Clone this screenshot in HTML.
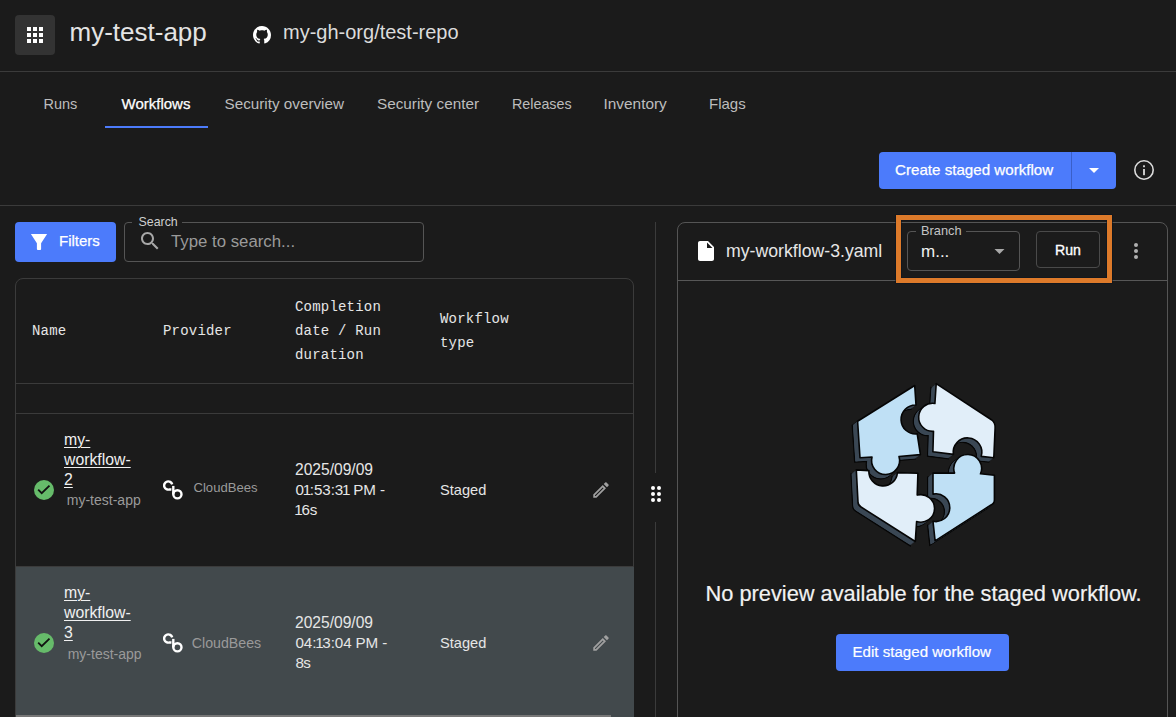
<!DOCTYPE html>
<html><head><meta charset="utf-8">
<style>
*{box-sizing:border-box;margin:0;padding:0}
html,body{width:1176px;height:717px;overflow:hidden;background:#1b1b1b;font-family:"Liberation Sans",sans-serif;color:#e6e6e6}
.abs{position:absolute}
.t{position:absolute;white-space:nowrap}
.hline{position:absolute;height:1px;background:#3b3b3b}
.vline{position:absolute;width:1px;background:#3b3b3b}
.tab{position:absolute;top:95px;font-size:15px;color:#bdbdbd;white-space:nowrap;line-height:17px}
.wf{font-size:15.8px;line-height:20px;color:#f0f0f0;text-decoration:underline;text-underline-offset:1.5px;text-decoration-thickness:1px}
.dt{font-size:15.6px;line-height:20px;color:#e6e6e6}
.dt2{font-size:15.2px;line-height:20px;color:#e6e6e6;letter-spacing:-0.1px}
.one{margin-left:-1.2px;margin-right:-1.2px}
.mono{font-family:"Liberation Mono",monospace;font-size:14px;color:#e6e6e6;line-height:24px;letter-spacing:0.2px;margin-top:1px}
</style></head>
<body>
<!-- header -->
<div class="abs" style="left:15px;top:15px;width:40px;height:40px;border-radius:4px;background:#333"></div>
<svg class="abs" style="left:27px;top:27px" width="16" height="16" viewBox="0 0 16 16" fill="#fff">
<rect x="0" y="0" width="4" height="4"/><rect x="6" y="0" width="4" height="4"/><rect x="12" y="0" width="4" height="4"/>
<rect x="0" y="6" width="4" height="4"/><rect x="6" y="6" width="4" height="4"/><rect x="12" y="6" width="4" height="4"/>
<rect x="0" y="12" width="4" height="4"/><rect x="6" y="12" width="4" height="4"/><rect x="12" y="12" width="4" height="4"/>
</svg>
<div class="t" style="left:69.5px;top:16.5px;font-size:26px;line-height:30px;color:#e4e4e4">my-test-app</div>
<svg class="abs" style="left:253px;top:26px" width="18" height="18" viewBox="0 0 16 16" fill="#fff"><path d="M8 0C3.58 0 0 3.58 0 8c0 3.54 2.29 6.53 5.47 7.59.4.07.55-.17.55-.38 0-.19-.01-.82-.01-1.49-2.01.37-2.53-.49-2.69-.94-.09-.23-.48-.94-.82-1.13-.28-.15-.68-.52-.01-.53.63-.01 1.08.58 1.23.82.72 1.21 1.87.87 2.33.66.07-.52.28-.87.51-1.07-1.78-.2-3.640-.89-3.64-3.95 0-.87.31-1.59.82-2.15-.08-.2-.36-1.02.08-2.12 0 0 .67-.21 2.2.82.64-.18 1.32-.27 2-.27.68 0 1.36.09 2 .27 1.53-1.04 2.2-.82 2.2-.82.44 1.1.16 1.92.08 2.12.51.56.82 1.27.82 2.15 0 3.07-1.87 3.75-3.65 3.95.29.25.54.73.54 1.48 0 1.07-.01 1.93-.01 2.2 0 .21.15.46.55.38A8.013 8.013 0 0016 8c0-4.42-3.58-8-8-8z"/></svg>
<div class="t" style="left:283px;top:20.4px;font-size:20px;line-height:24px;color:#dcdcdc">my-gh-org/test-repo</div>
<div class="hline" style="left:0;top:71px;width:1176px"></div>

<!-- tabs -->
<div class="tab" style="left:43.5px;top:96px;font-size:14.5px">Runs</div>
<div class="tab" style="left:121.5px;color:#fff;-webkit-text-stroke:0.25px #fff">Workflows</div>
<div class="tab" style="left:224.5px;font-size:15.25px">Security overview</div>
<div class="tab" style="left:377px;font-size:15.3px">Security center</div>
<div class="tab" style="left:512px;top:96px;font-size:14.3px">Releases</div>
<div class="tab" style="left:603.5px;font-size:15.4px">Inventory</div>
<div class="tab" style="left:709px">Flags</div>
<div class="abs" style="left:105px;top:126px;width:103px;height:2px;background:#4c7bfb"></div>

<!-- create button -->
<div class="abs" style="left:879px;top:152px;width:237px;height:37px;border-radius:4px;background:#4c7bfb"></div>
<div class="abs" style="left:1071px;top:152px;width:1px;height:37px;background:#3a5fc8"></div>
<div class="t" style="left:895px;top:161px;font-size:15.15px;line-height:18px;color:#fff;-webkit-text-stroke:0.25px #fff">Create staged workflow</div>
<svg class="abs" style="left:1089px;top:167.7px" width="10" height="6" viewBox="0 0 10 6"><path d="M0 0h10l-5 5z" fill="#fff"/></svg>
<svg class="abs" style="left:1133px;top:159px" width="22" height="22" viewBox="0 0 22 22"><circle cx="11" cy="11" r="9.2" fill="none" stroke="#dcdcdc" stroke-width="1.6"/><rect x="10.1" y="10" width="1.8" height="6.2" fill="#dcdcdc"/><rect x="10.1" y="6.3" width="1.8" height="1.9" fill="#dcdcdc"/></svg>
<div class="hline" style="left:0;top:205px;width:1176px"></div>

<!-- filters / search -->
<div class="abs" style="left:15px;top:222px;width:101px;height:40px;border-radius:4px;background:#4c7bfb"></div>
<svg class="abs" style="left:30px;top:233px" width="18" height="18" viewBox="0 0 18 18"><path d="M0.9 1.1H17.1L11.1 10.2V16Q11.1 17 10.1 17H7.9Q6.9 17 6.9 16V10.2Z" fill="#fff"/></svg>
<div class="t" style="left:59px;top:232px;font-size:15px;line-height:18px;color:#fff;-webkit-text-stroke:0.25px #fff">Filters</div>
<div class="abs" style="left:124px;top:222px;width:300px;height:40px;border:1px solid #555;border-radius:4px"></div>
<div class="abs" style="left:132px;top:214px;width:50px;height:14px;background:#1b1b1b"></div>
<div class="t" style="left:138.5px;top:215px;font-size:12.4px;line-height:15px;color:#cfcfcf">Search</div>
<svg class="abs" style="left:138px;top:229px" width="24" height="24" viewBox="0 0 24 24"><path d="M15.5 14h-.79l-.28-.27C15.41 12.59 16 11.11 16 9.5 16 5.91 13.09 3 9.5 3S3 5.910 3 9.5 5.91 16 9.5 16c1.61 0 3.09-.59 4.23-1.57l.27.28v.79l5 4.99L20.49 19l-4.99-5zm-6 0C7.01 14 5 11.99 5 9.5S7.01 5 9.5 5 14 7.01 14 9.5 11.99 14 9.5 14z" fill="#a8a8a8"/></svg>
<div class="t" style="left:171px;top:232px;font-size:16.8px;line-height:20px;color:#9a9a9a">Type to search...</div>

<!-- table card -->
<div class="abs" style="left:15px;top:278px;width:619px;height:460px;border:1px solid #3b3b3b;border-radius:8px"></div>
<div class="t mono" style="left:32px;top:318px">Name</div>
<div class="t mono" style="left:163px;top:318px">Provider</div>
<div class="t mono" style="left:295px;top:294px;white-space:normal;width:120px">Completion<br>date / Run<br>duration</div>
<div class="t mono" style="left:440px;top:306px">Workflow<br>type</div>
<div class="hline" style="left:16px;top:383px;width:617px"></div>
<div class="hline" style="left:16px;top:413px;width:617px"></div>
<div class="hline" style="left:16px;top:566px;width:617px"></div>


<!-- selected row bg -->
<div class="abs" style="left:16px;top:567px;width:618px;height:150px;background:#42494c"></div><div class="hline" style="left:16px;top:566px;width:618px"></div>
<div class="abs" style="left:16px;top:715px;width:595px;height:2px;background:#777"></div>
<!-- rows -->
<svg class="abs" style="left:34px;top:480px" width="20" height="20" viewBox="0 0 20 20"><circle cx="10" cy="10" r="10" fill="#66bb6a"/><path d="M4.2 9.7L7.7 13.2L15.5 5.6" fill="none" stroke="#111" stroke-width="1.8"/></svg>
<div class="t wf" style="left:64px;top:430px">my-<br>workflow-<br>2</div>
<div class="t" style="left:66.8px;top:492.4px;font-size:14px;line-height:16px;color:#9a9a9a">my-test-app</div>
<svg class="abs" style="left:163px;top:480px" width="20" height="20" viewBox="0 0 20 20" fill="none" stroke="#fff" stroke-width="2.4"><path d="M9.2 4.4A4.1 4.1 0 1 0 6.6 9.4L8.4 9.5"/><circle cx="14.4" cy="14.3" r="4.1"/><path d="M10.3 5.9V14.3"/></svg>
<div class="t" style="left:193.5px;top:480px;font-size:13.1px;line-height:16px;color:#9a9a9a">CloudBees</div>
<div class="t dt" style="left:295px;top:460px">2025/09/09</div><div class="t dt2" style="left:295.5px;top:480px">0<span class="one">1</span>:53:3<span class="one">1</span> PM -</div><div class="t dt2" style="left:295.5px;top:500px"><span class="one">1</span>6s</div>
<div class="t" style="left:440px;top:481px;font-size:14.6px;line-height:18px;color:#e6e6e6">Staged</div>
<svg class="abs" style="left:588.5px;top:478px" width="24" height="24" viewBox="0 0 24 24"><path d="M3 17.25V21h3.75L17.81 9.94l-3.75-3.75L3 17.25zM5.92 19H5v-.92l9.06-9.06.92.92L5.92 19zM20.71 5.63l-2.34-2.34c-.2-.2-.45-.29-.71-.29s-.51.1-.7.29l-1.83 1.83 3.75 3.75 1.83-1.83c.39-.39.39-1.02 0-1.41z" fill="#a0a0a0" transform="translate(12 12) scale(0.86) translate(-12 -12)"/></svg>

<svg class="abs" style="left:34px;top:633px" width="20" height="20" viewBox="0 0 20 20"><circle cx="10" cy="10" r="10" fill="#66bb6a"/><path d="M4.2 9.7L7.7 13.2L15.5 5.6" fill="none" stroke="#111" stroke-width="1.8"/></svg>
<div class="t wf" style="left:64px;top:583px">my-<br>workflow-<br>3</div>
<div class="t" style="left:67.7px;top:646.4px;font-size:14px;line-height:16px;color:#9a9a9a">my-test-app</div>
<svg class="abs" style="left:163px;top:633px" width="20" height="20" viewBox="0 0 20 20" fill="none" stroke="#fff" stroke-width="2.4"><path d="M9.2 4.4A4.1 4.1 0 1 0 6.6 9.4L8.4 9.5"/><circle cx="14.4" cy="14.3" r="4.1"/><path d="M10.3 5.9V14.3"/></svg>
<div class="t" style="left:191.8px;top:635px;font-size:14.2px;line-height:16px;color:#9a9a9a">CloudBees</div>
<div class="t dt" style="left:295px;top:613px">2025/09/09</div><div class="t dt2" style="left:295.5px;top:633px">04:<span class="one">1</span>3:04 PM -</div><div class="t dt2" style="left:295.5px;top:653px;letter-spacing:-0.6px">8s</div>
<div class="t" style="left:440px;top:634px;font-size:14.6px;line-height:18px;color:#e6e6e6">Staged</div>
<svg class="abs" style="left:588.5px;top:631px" width="24" height="24" viewBox="0 0 24 24"><path d="M3 17.25V21h3.75L17.81 9.94l-3.75-3.75L3 17.25zM5.92 19H5v-.92l9.06-9.06.92.92L5.92 19zM20.71 5.63l-2.34-2.34c-.2-.2-.45-.29-.71-.29s-.51.1-.7.29l-1.83 1.83 3.75 3.75 1.83-1.83c.39-.39.39-1.02 0-1.41z" fill="#a0a0a0" transform="translate(12 12) scale(0.86) translate(-12 -12)"/></svg>

<!-- splitter -->
<div class="vline" style="left:655px;top:222px;height:251px"></div>
<div class="vline" style="left:655px;top:522px;height:195px"></div>
<svg class="abs" style="left:650px;top:485px" width="12" height="18" viewBox="0 0 12 18" fill="#fff"><circle cx="3" cy="3" r="2"/><circle cx="9" cy="3" r="2"/><circle cx="3" cy="9" r="2"/><circle cx="9" cy="9" r="2"/><circle cx="3" cy="15" r="2"/><circle cx="9" cy="15" r="2"/></svg>

<!-- right card -->
<div class="abs" style="left:677px;top:222px;width:491px;height:520px;border:1px solid #555;border-radius:8px"></div>
<div class="hline" style="left:678px;top:280px;width:489px;background:#575757"></div>
<svg class="abs" style="left:694px;top:239px" width="24" height="24" viewBox="0 0 24 24"><path d="M6 2c-1.1 0-2 .9-2 2v16c0 1.1.9 2 2 2h12c1.1 0 2-.9 2-2V8l-6-6H6zm7 7V3.5L18.5 9H13z" fill="#fff"/></svg>
<div class="t" style="left:726px;top:241px;font-size:17.7px;line-height:20px;color:#e6e6e6">my-workflow-3.yaml</div>


<!-- branch select -->
<div class="abs" style="left:907px;top:231px;width:113px;height:40px;border:1px solid #555;border-radius:4px"></div>
<div class="abs" style="left:916px;top:224px;width:50px;height:14px;background:#1b1b1b"></div>
<div class="t" style="left:921px;top:223px;font-size:12.8px;line-height:15px;color:#c4c4c4">Branch</div>
<div class="t" style="left:921px;top:242px;font-size:17px;line-height:20px;color:#f0f0f0">m...</div>
<svg class="abs" style="left:993.5px;top:249px" width="12" height="6" viewBox="0 0 12 6"><path d="M0.5 0h10l-5 5z" fill="#a8a8a8"/></svg>
<!-- run -->
<div class="abs" style="left:1036px;top:231px;width:64px;height:37px;border:1px solid #4a4a4a;border-radius:4px"></div>
<div class="t" style="left:1055px;top:240.5px;font-size:14.1px;line-height:18px;color:#fff;-webkit-text-stroke:0.35px #fff">Run</div>
<!-- kebab -->
<svg class="abs" style="left:1132px;top:241px" width="8" height="20" viewBox="0 0 8 20" fill="#b0b0b0"><circle cx="4" cy="4" r="2"/><circle cx="4" cy="10" r="2"/><circle cx="4" cy="16" r="2"/></svg>
<!-- orange highlight -->
<div class="abs" style="left:896px;top:215px;width:216px;height:68px;border:5px solid #dd7a2a;box-shadow:inset 0 0 0 0.6px #0c1420, 0 0 0 0.6px #0c1420"></div>
<!-- illustration -->
<svg class="abs" style="left:840px;top:375px" width="165" height="180" viewBox="840 375 165 180"><defs><path id="p0" d="M914.7 385.5L857.6 421.3L860 457.8L872 457A14 14 0 1 0 899 456.5L920.4 454.6L917.2 433.9A14.5 14.5 0 1 1 916 405L914.7 385.5Z"/><path id="p1" d="M936.2 383.6L991.8 420Q995.5 423 995.1 428L993.8 457.7L981.2 456.4A14.3 14.3 0 1 0 953.4 454.4L932.9 451.8L933.5 431.3A14 14 0 1 1 934.9 403.5L936.2 383.6Z"/><path id="p2" d="M856.3 469.9L868.9 470.6A14 14 0 1 0 897.4 472.6L917.9 473.3L917.2 495.1A13.8 13.8 0 1 1 916.6 521.6L915.3 541.5L861 507Q858 505 858 502L856.3 469.9Z"/><path id="p3" d="M933 473.1L954.6 473.1A13.9 13.9 0 1 1 980.5 473.8L994.4 475.2L994.4 500Q994.4 503.5 991 505L935.1 540.8L933 521.3A13.9 13.9 0 1 0 933 494.1L933 473.1Z"/></defs><use href="#p0" transform="translate(-5.2 4.2)" fill="#3a4754" stroke="#050505" stroke-width="1.5"/><use href="#p0" transform="translate(-0.52 0.42)" fill="#3a4754"/><use href="#p0" transform="translate(-1.04 0.84)" fill="#3a4754"/><use href="#p0" transform="translate(-1.56 1.26)" fill="#3a4754"/><use href="#p0" transform="translate(-2.08 1.68)" fill="#3a4754"/><use href="#p0" transform="translate(-2.60 2.10)" fill="#3a4754"/><use href="#p0" transform="translate(-3.12 2.52)" fill="#3a4754"/><use href="#p0" transform="translate(-3.64 2.94)" fill="#3a4754"/><use href="#p0" transform="translate(-4.16 3.36)" fill="#3a4754"/><use href="#p0" transform="translate(-4.68 3.78)" fill="#3a4754"/><use href="#p1" transform="translate(-5.2 4.2)" fill="#3a4754" stroke="#050505" stroke-width="1.5"/><use href="#p1" transform="translate(-0.52 0.42)" fill="#3a4754"/><use href="#p1" transform="translate(-1.04 0.84)" fill="#3a4754"/><use href="#p1" transform="translate(-1.56 1.26)" fill="#3a4754"/><use href="#p1" transform="translate(-2.08 1.68)" fill="#3a4754"/><use href="#p1" transform="translate(-2.60 2.10)" fill="#3a4754"/><use href="#p1" transform="translate(-3.12 2.52)" fill="#3a4754"/><use href="#p1" transform="translate(-3.64 2.94)" fill="#3a4754"/><use href="#p1" transform="translate(-4.16 3.36)" fill="#3a4754"/><use href="#p1" transform="translate(-4.68 3.78)" fill="#3a4754"/><use href="#p2" transform="translate(-5.2 4.2)" fill="#3a4754" stroke="#050505" stroke-width="1.5"/><use href="#p2" transform="translate(-0.52 0.42)" fill="#3a4754"/><use href="#p2" transform="translate(-1.04 0.84)" fill="#3a4754"/><use href="#p2" transform="translate(-1.56 1.26)" fill="#3a4754"/><use href="#p2" transform="translate(-2.08 1.68)" fill="#3a4754"/><use href="#p2" transform="translate(-2.60 2.10)" fill="#3a4754"/><use href="#p2" transform="translate(-3.12 2.52)" fill="#3a4754"/><use href="#p2" transform="translate(-3.64 2.94)" fill="#3a4754"/><use href="#p2" transform="translate(-4.16 3.36)" fill="#3a4754"/><use href="#p2" transform="translate(-4.68 3.78)" fill="#3a4754"/><use href="#p3" transform="translate(-5.2 4.2)" fill="#3a4754" stroke="#050505" stroke-width="1.5"/><use href="#p3" transform="translate(-0.52 0.42)" fill="#3a4754"/><use href="#p3" transform="translate(-1.04 0.84)" fill="#3a4754"/><use href="#p3" transform="translate(-1.56 1.26)" fill="#3a4754"/><use href="#p3" transform="translate(-2.08 1.68)" fill="#3a4754"/><use href="#p3" transform="translate(-2.60 2.10)" fill="#3a4754"/><use href="#p3" transform="translate(-3.12 2.52)" fill="#3a4754"/><use href="#p3" transform="translate(-3.64 2.94)" fill="#3a4754"/><use href="#p3" transform="translate(-4.16 3.36)" fill="#3a4754"/><use href="#p3" transform="translate(-4.68 3.78)" fill="#3a4754"/><use href="#p0" fill="#bfe0f5" stroke="#050505" stroke-width="1.6" stroke-linejoin="round"/><use href="#p1" fill="#e1eef9" stroke="#050505" stroke-width="1.6" stroke-linejoin="round"/><use href="#p2" fill="#e1eef9" stroke="#050505" stroke-width="1.6" stroke-linejoin="round"/><use href="#p3" fill="#bfe0f5" stroke="#050505" stroke-width="1.6" stroke-linejoin="round"/></svg>
<!-- message -->
<div class="t" style="left:705.5px;top:582px;font-size:21.8px;line-height:24px;color:#f2f2f2;-webkit-text-stroke:0.2px #f2f2f2">No preview available for the staged workflow.</div>
<div class="abs" style="left:836px;top:634px;width:173px;height:37px;border-radius:4px;background:#4c7bfb"></div>
<div class="t" style="left:852.5px;top:643px;font-size:15.1px;line-height:18px;color:#fff;-webkit-text-stroke:0.2px #fff">Edit staged workflow</div>
</body></html>
